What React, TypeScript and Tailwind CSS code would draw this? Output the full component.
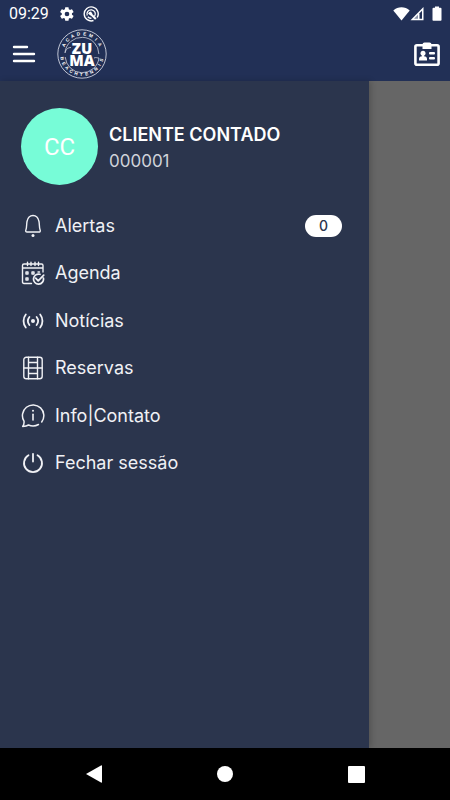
import type { ReactNode } from "react";

const topLetters = Array.from("ACADEMIA").map((char, i) => ({ char, angle: -64 + i * 18 }));
const bottomLetters = Array.from("BEACHTENNIS").map((char, i) => ({ char, angle: 77 - i * 15 }));

function Logo() {
  return (
    <svg viewBox="0 0 50 50" className="size-[50px]" role="img" aria-label="Academia Zuma Beach Tennis">
      <g fill="none" stroke="#e6e9f2">
        <circle cx="25" cy="25" r="24.2" strokeWidth="0.8" />
        <path d="M8 23.5A17 17 0 0 1 41.9 25M42 29A17 17 0 0 1 8.2 28" strokeWidth="0.7" />
        <path d="M8 24c1-4 3-5.5 6-5.500M37 29c2-1 3 0 5 0" strokeWidth="0.7" />
      </g>
      <g fill="#fff" fontFamily="'Liberation Sans', sans-serif" fontWeight="700" fontSize="4.6" textAnchor="middle">
        {topLetters.map(({ char, angle }) => (
          <text key={angle} x="25" y="6.3" transform={`rotate(${angle} 25 25)`}>
            {char}
          </text>
        ))}
        {bottomLetters.map(({ char, angle }) => (
          <text key={angle} x="25" y="47" transform={`rotate(${angle} 25 25)`}>
            {char}
          </text>
        ))}
      </g>
      <text fill="#fff" fontFamily="'Open Sans', sans-serif" fontWeight="800" fontSize="15" textAnchor="middle">
        <tspan x="25" y="24.5">ZU</tspan>
        <tspan x="25" y="37">MA</tspan>
      </text>
    </svg>
  );
}

function StatusBar() {
  return (
    <div className="flex h-[27px] items-center justify-between pr-2 pl-[9px]">
      <div className="flex items-center">
        <span className="w-[50px] font-[Roboto,sans-serif] text-[16px] leading-5">09:29</span>
        <svg viewBox="0 0 24 24" className="size-4" fill="#fff">
          <path d="M19.4 13a7.8 7.8 0 0 0 0-2l2.2-1.7c.2-.2.3-.4.1-.7l-2-3.5c-.2-.3-.4-.3-.7-.2l-2.5 1a7.3 7.3 0 0 0-1.8-1L14.3 2.2c0-.3-.2-.4-.5-.4H9.8c-.3 0-.5.2-.5.4L8.9 4.9c-.6.3-1.2.6-1.8 1l-2.5-1c-.3-.1-.5 0-.7.2l-2 3.5c-.1.3-.1.5.1.7L4.2 11a8 8 0 0 0 0 2L2 14.7c-.2.2-.2.4-.1.7l2 3.5c.2.2.4.3.7.2l2.5-1c.6.4 1.2.7 1.8 1l.4 2.7c0 .2.2.4.5.4h4c.3 0 .5-.2.5-.4l.4-2.7c.6-.3 1.2-.6 1.8-1l2.5 1c.3.1.5 0 .7-.2l2-3.5c.1-.3.1-.5-.1-.7zM12 8.5a3.5 3.5 0 1 1 0 7 3.500 3.500 0 0 1 0-7z" fillRule="evenodd" />
        </svg>
        <svg viewBox="0 0 16 16" className="ml-2 size-4" fill="none" stroke="#fff">
          <path d="M10.500 14.500A7 7 0 1 1 14.200 11.500" strokeWidth="1.400" />
          <path d="M4.200 9.500A4.200 4.200 0 1 1 11.500 10.500M4.800 10.800A4.200 4.200 0 0 0 8.500 12.200" strokeWidth="1.300" />
          <path d="M6.500 6.800 12.800 13" strokeWidth="2" />
          <path d="M5 7.500Q6 5.500 8 5.500L9.500 8 7.500 9.500z" fill="#fff" stroke="none" />
        </svg>
      </div>
      <div className="flex items-center">
        <svg viewBox="0 0 17 14" className="h-[14px] w-[17px]" fill="#fff">
          <path d="M.3 3.5C5-.7 12-.7 16.7 3.5L8.5 13.6z" />
        </svg>
        <svg viewBox="0 0 14 15" className="h-[15px] w-[14px]">
          <path d="M.5 14.200 13.500 1v13.200z" fill="#fff" />
          <path d="M9.500 7.300 12 4.800v8H9.500z" fill="#223056" />
          <path d="M4 12.800 8 8.800v4z" fill="#8a93a8" />
        </svg>
        <svg viewBox="0 0 10 15" className="ml-2 h-[15px] w-[10px]" fill="#fff">
          <path d="M3 .5h4v1.3h1.5q1 0 1 1V14q0 .8-.8.8H1.3q-.8 0-.8-.8V2.8q0-1 1-1H3z" />
        </svg>
      </div>
    </div>
  );
}

function Icon({ children }: { children: ReactNode }) {
  return (
    <svg viewBox="0 0 24 24" className="size-6 shrink-0" fill="none" stroke="#f0f1f5" strokeWidth="1.4" strokeLinecap="round" strokeLinejoin="round" aria-hidden="true">
      {children}
    </svg>
  );
}

const items = [
  {
    label: "Alertas",
    badge: "0",
    icon: (
      <>
        <path d="M6.2 18Q4 18 5 15.5C5.8 13.5 5.5 10 6 7.5 6.7 4 8.8 1.500 12 1.500S17.3 4 18 7.5c.5 2.5.2 6 1 8 1 2.5-.5 2.5-1.2 2.500z" />
        <circle cx="12" cy="21.5" r="1.5" fill="#f0f1f5" stroke="none" />
      </>
    ),
  },
  {
    label: "Agenda",
    icon: (
      <>
        <path d="M10.5 22.5H3q-1.5 0-1.5-1.5V4.5Q1.5 3 3 3h17.5Q22 3 22 4.5V11M1.5 7H22M6.5 1.3v3.2M10 1.3v3.2M14 1.3v3.2M17.5 1.3v3.2" />
        <path d="M5 11h2v2H5zM11 11h2v2h-2zM5 17h2v2H5zM17 11h1.5" />
        <path d="M19 13.3A5 5 0 1 0 22.4 17M14.7 17.2l2.5 2.6 5.5-5.6" strokeWidth="1.7" />
      </>
    ),
  },
  {
    label: "Notícias",
    icon: (
      <>
        <path d="M4.8 5.5A10.5 10.5 0 0 0 4.8 18.5M19.2 5.5a10.5 10.5 0 0 1 0 13M8.4 8a6.5 6.5 0 0 0 0 8M15.6 8a6.5 6.5 0 0 1 0 8" strokeWidth="1.8" />
        <circle cx="12" cy="12" r="2" fill="#f0f1f5" stroke="none" />
      </>
    ),
  },
  {
    label: "Reservas",
    icon: (
      <>
        <rect x="2.8" y="1.2" width="18.4" height="21.6" rx="2.5" />
        <path d="M7.5 1.2v21.6M16.5 1.2v21.6M7.5 6.5h9M2.8 12h18.4M7.5 17.5h9" />
      </>
    ),
  },
  {
    label: "Info|Contato",
    icon: (
      <>
        <path d="M20.7 18A10.7 10.7 0 1 0 3 17.2Q3.4 20 1.7 22.5 5.5 22.2 7.5 21A11 11 0 0 0 17.5 20.5" strokeWidth="1.5" />
        <path d="M12 10.2v5.8" strokeWidth="1.6" />
        <circle cx="12" cy="6.8" r="1" fill="#f0f1f5" stroke="none" />
      </>
    ),
  },
  {
    label: "Fechar sessão",
    icon: <path d="M12 2.8v7.7M7.5 4.3a9 9 0 1 0 9 0" strokeWidth="1.8" />,
  },
];

export default function App() {
  return (
    <div className="flex min-h-screen flex-col bg-[#666] font-[Inter,sans-serif] text-white">
      <header className="bg-[#223056]">
        <StatusBar />
        <div className="flex h-[54px] items-center pr-[9px] pl-3">
          <button type="button" aria-label="Menu" className="flex h-8 w-6 items-center justify-center">
            <svg viewBox="0 0 24 18" className="h-[18px] w-6" stroke="#fff" strokeWidth="2.4" strokeLinecap="round">
              <path d="M2 2h13M2 9h20M2 16h20" />
            </svg>
          </button>
          <div className="ml-[21px]">
            <Logo />
          </div>
          <button type="button" aria-label="Cartão de cliente" className="ml-auto">
            <svg viewBox="0 0 28 26" className="h-[26px] w-7" fill="#fff">
              <rect x="2.4" y="4.2" width="23.2" height="19.5" rx="1.5" fill="none" stroke="#fff" strokeWidth="2.6" />
              <path d="M9.5 3.5Q9.5 1.5 11.5 1.5h5Q18.5 1.5 18.5 3.5V8h-9z" />
              <circle cx="10" cy="12.3" r="2.5" />
              <path d="M9 13h2v2.3q3 .3 3 2.7v1.5H6V18q0-2.4 3-2.7z" />
              <rect x="16" y="11" width="6" height="2.5" rx="1" />
              <rect x="16" y="16" width="6" height="2.5" rx="1" />
            </svg>
          </button>
        </div>
      </header>

      <main className="flex grow">
        <aside className="w-[82%] bg-[#2b354d] pt-[27px] pr-[27px] pl-[21px] shadow-[2px_0_6px_rgba(0,0,0,0.2)]">
          <div className="flex items-center gap-[11px]">
            <div className="flex size-[77px] shrink-0 items-center justify-center rounded-full bg-[#77fcd7] font-[Roboto,sans-serif] text-[24px] leading-7">
              CC
            </div>
            <div>
              <h1 className="text-[18px] leading-7 font-semibold">CLIENTE CONTADO</h1>
              <p className="text-[17px] leading-6 text-[#d0d3da]">000001</p>
            </div>
          </div>
          <nav className="mt-[17px]">
            <ul className="grid h-[285px] grid-rows-6">
              {items.map((item) => (
                <li key={item.label}>
                  <a href="#" className="flex h-full items-center text-[18px] leading-6 text-[#f0f1f5]">
                    <Icon>{item.icon}</Icon>
                    <span className="ml-[10px]">{item.label}</span>
                    {item.badge && (
                      <span className="ml-auto flex h-[22px] w-[37px] items-center justify-center rounded-full bg-white text-[14px] leading-5 font-medium text-[#2b354d]">
                        {item.badge}
                      </span>
                    )}
                  </a>
                </li>
              ))}
            </ul>
          </nav>
        </aside>
      </main>

      <footer className="flex h-[52px] items-center justify-around bg-black px-7">
        <button type="button" aria-label="Voltar">
          <svg viewBox="0 0 18 18" className="size-[18px]" fill="#fff">
            <path d="M1 9 16 0.5Q17 0 17 1v16q0 1-1 .5z" />
          </svg>
        </button>
        <button type="button" aria-label="Início" className="size-4 rounded-full bg-white" />
        <button type="button" aria-label="Recentes" className="size-[17px] rounded-[1px] bg-white" />
      </footer>
    </div>
  );
}
